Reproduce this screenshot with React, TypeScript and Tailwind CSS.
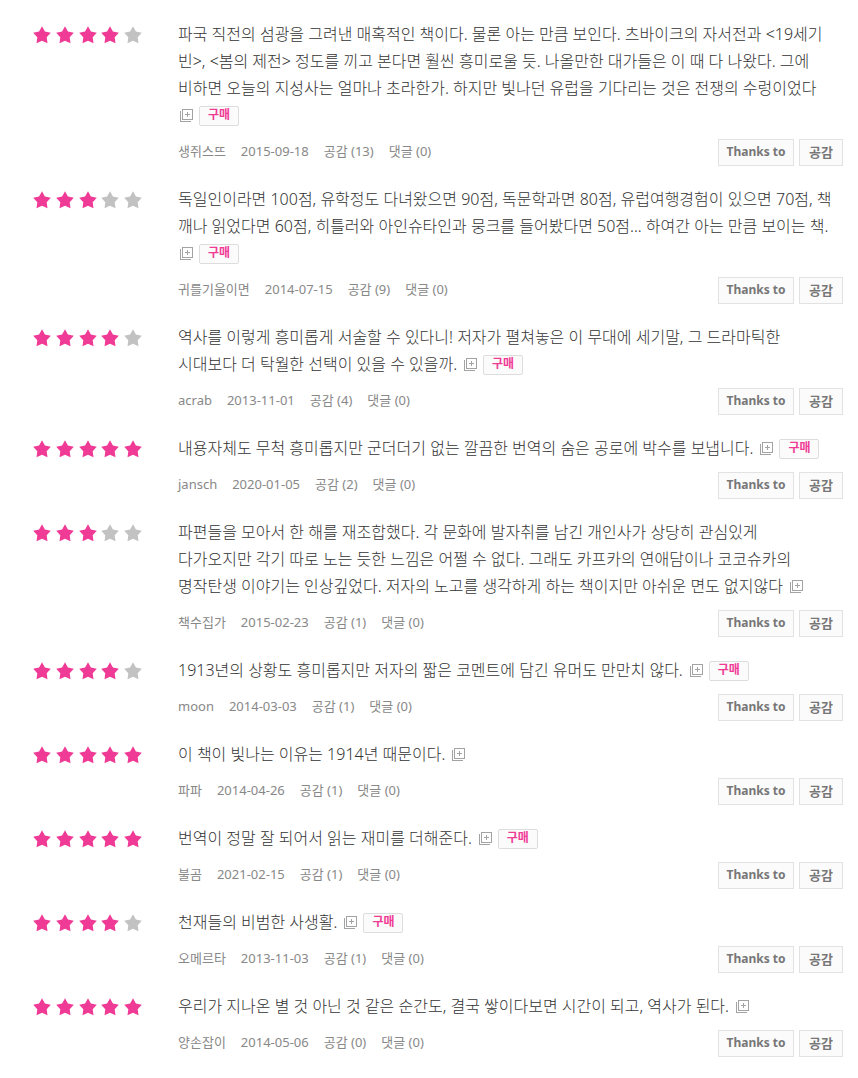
type Review = {
  id: number;
  rating: number;
  lines: string[];
  bought?: boolean;
  // the badge and the icon drop below the text when the last line is full
  wrapBadge?: boolean;
  author: string;
  date: string;
  likes: number;
  comments: number;
};

const REVIEWS: Review[] = [
  {
    id: 1, rating: 4, bought: true, wrapBadge: true,
    lines: [
      "파국 직전의 섬광을 그려낸 매혹적인 책이다. 물론 아는 만큼 보인다. 츠바이크의 자서전과 <19세기",
      "빈>, <봄의 제전> 정도를 끼고 본다면 훨씬 흥미로울 듯. 나올만한 대가들은 이 때 다 나왔다. 그에",
      "비하면 오늘의 지성사는 얼마나 초라한가. 하지만 빛나던 유럽을 기다리는 것은 전쟁의 수렁이었다",
    ],
    author: "생쥐스뜨", date: "2015-09-18", likes: 13, comments: 0,
  },
  {
    id: 2, rating: 3, bought: true, wrapBadge: true,
    lines: [
      "독일인이라면 100점, 유학정도 다녀왔으면 90점, 독문학과면 80점, 유럽여행경험이 있으면 70점, 책",
      "깨나 읽었다면 60점, 히틀러와 아인슈타인과 뭉크를 들어봤다면 50점... 하여간 아는 만큼 보이는 책.",
    ],
    author: "귀를기울이면", date: "2014-07-15", likes: 9, comments: 0,
  },
  {
    id: 3, rating: 4, bought: true,
    lines: [
      "역사를 이렇게 흥미롭게 서술할 수 있다니! 저자가 펼쳐놓은 이 무대에 세기말, 그 드라마틱한",
      "시대보다 더 탁월한 선택이 있을 수 있을까.",
    ],
    author: "acrab", date: "2013-11-01", likes: 4, comments: 0,
  },
  {
    id: 4, rating: 5, bought: true,
    lines: ["내용자체도 무척 흥미롭지만 군더더기 없는 깔끔한 번역의 숨은 공로에 박수를 보냅니다."],
    author: "jansch", date: "2020-01-05", likes: 2, comments: 0,
  },
  {
    id: 5, rating: 3,
    lines: [
      "파편들을 모아서 한 해를 재조합했다. 각 문화에 발자취를 남긴 개인사가 상당히 관심있게",
      "다가오지만 각기 따로 노는 듯한 느낌은 어쩔 수 없다. 그래도 카프카의 연애담이나 코코슈카의",
      "명작탄생 이야기는 인상깊었다. 저자의 노고를 생각하게 하는 책이지만 아쉬운 면도 없지않다",
    ],
    author: "책수집가", date: "2015-02-23", likes: 1, comments: 0,
  },
  {
    id: 6, rating: 4, bought: true,
    lines: ["1913년의 상황도 흥미롭지만 저자의 짧은 코멘트에 담긴 유머도 만만치 않다."],
    author: "moon", date: "2014-03-03", likes: 1, comments: 0,
  },
  {
    id: 7, rating: 5,
    lines: ["이 책이 빛나는 이유는 1914년 때문이다."],
    author: "파파", date: "2014-04-26", likes: 1, comments: 0,
  },
  {
    id: 8, rating: 5, bought: true,
    lines: ["번역이 정말 잘 되어서 읽는 재미를 더해준다."],
    author: "불곰", date: "2021-02-15", likes: 1, comments: 0,
  },
  {
    id: 9, rating: 4, bought: true,
    lines: ["천재들의 비범한 사생활."],
    author: "오메르타", date: "2013-11-03", likes: 1, comments: 0,
  },
  {
    id: 10, rating: 5,
    lines: ["우리가 지나온 별 것 아닌 것 같은 순간도, 결국 쌓이다보면 시간이 되고, 역사가 된다."],
    author: "양손잡이", date: "2014-05-06", likes: 0, comments: 0,
  },
];

export default function App() {
  return (
    <main className="min-h-screen bg-white pt-[21px] pr-[15px] pl-[33px] font-['Noto_Sans','Noto_Sans_CJK_KR',sans-serif]">
      <ul className="flex flex-col gap-5">
        {REVIEWS.map((r) => (
          <ReviewRow key={r.id} review={r} />
        ))}
      </ul>
    </main>
  );
}

function ReviewRow({ review: r }: { review: Review }) {
  const last = r.lines.length - 1;
  return (
    <li className="flex">
      <Stars rating={r.rating} />
      <article className="min-w-0 flex-1">
        <div className="text-[16px] leading-[27px] font-light text-[#333333]">
          {r.lines.map((line, i) => (
            <p key={i} className="flex items-center whitespace-nowrap">
              {line}
              {i === last && !r.wrapBadge && <Marks bought={r.bought} className="ml-[7px]" />}
            </p>
          ))}
          {r.wrapBadge && <Marks bought={r.bought} className="ml-[2px]" />}
        </div>

        <div className="mt-[10px] flex h-[27px] items-start justify-between">
          <div className="flex gap-[15px] text-[13px] leading-[24px] text-[#888888]">
            <a href="#author">{r.author}</a>
            <span>{r.date}</span>
            <a href="#likes">공감 ({r.likes})</a>
            <a href="#comments">댓글 ({r.comments})</a>
          </div>
          <div className="flex gap-[5px]">
            <ActionButton className="w-[76px] text-[12px]">Thanks to</ActionButton>
            <ActionButton className="w-[44px] text-[13px]">공감</ActionButton>
          </div>
        </div>
      </article>
    </li>
  );
}

function Marks({ bought, className }: { bought?: boolean; className: string }) {
  return (
    <span className={`flex h-[27px] items-center gap-[6px] ${className}`}>
      <button type="button" aria-label="새창으로 보기">
        <svg width="13" height="13" viewBox="0 0 13 13" fill="none" stroke="#a3a3a3" className="block" shapeRendering="crispEdges">
          <path d="M2.5 0.5h10v10h-10z" />
          <path d="M0.5 2v10.5H11" />
          <path d="M5 5.5h5M7.5 3v5" />
        </svg>
      </button>
      {bought && (
        <span className="flex h-[20px] w-[40px] justify-center rounded-[2px] border border-[#dddddd] bg-[#fbfbfb] text-[12px] leading-[16px] font-bold text-[#f03b96]">
          구매
        </span>
      )}
    </span>
  );
}

function ActionButton({ children, className }: { children: string; className: string }) {
  return (
    <button
      type="button"
      className={`flex h-[27px] justify-center border border-[#e2e2e2] bg-[#fbfbfb] leading-[24px] font-bold whitespace-nowrap text-[#777777] ${className}`}
    >
      {children}
    </button>
  );
}

function Stars({ rating }: { rating: number }) {
  return (
    <div className="mr-9 flex h-[27px] w-[109px] shrink-0 items-center justify-between" role="img" aria-label={`별점 ${rating}점`}>
      {[1, 2, 3, 4, 5].map((n) => (
        <svg key={n} width="18" height="18" viewBox="0 0 18 18" fill={n <= rating ? "#f03b96" : "#c2c2c2"}>
          <path d="M9 0.3 11.9 5.6 17.8 6.8 13.7 11.2 14.5 17.2 9 14.8 3.5 17.2 4.3 11.2 0.2 6.8 6.1 5.6Z" />
        </svg>
      ))}
    </div>
  );
}
